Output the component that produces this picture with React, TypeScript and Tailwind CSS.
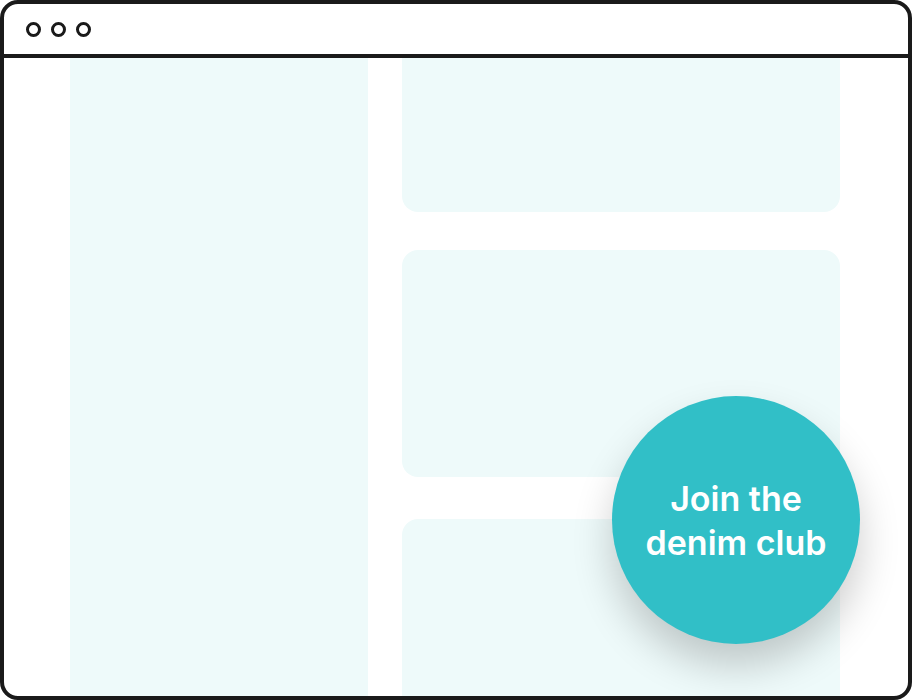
export default function App() {
  return (
    <div className="h-[700px] w-[912px] bg-white" style={{ fontFamily: 'Inter, "Noto Sans", sans-serif' }}>
      <div className="relative flex h-full w-full flex-col overflow-hidden rounded-[18px] border-4 border-[#1a1a1a] bg-white">
        {/* window bar */}
        <div className="flex h-[54px] shrink-0 items-center gap-[10px] border-b-4 border-[#1a1a1a] pl-[22px]">
          <span className="h-[15px] w-[15px] rounded-full border-[3.5px] border-[#1a1a1a]" />
          <span className="h-[15px] w-[15px] rounded-full border-[3.5px] border-[#1a1a1a]" />
          <span className="h-[15px] w-[15px] rounded-full border-[3.5px] border-[#1a1a1a]" />
        </div>

        {/* page skeleton */}
        <div className="flex min-h-0 flex-1 gap-[34px] pl-[66px]">
          <div className="w-[298px] bg-[#eefafa]" />
          <div className="flex w-[438px] flex-col">
            <div className="h-[154px] shrink-0 rounded-b-[16px] bg-[#eefafa]" />
            <div className="mt-[38px] h-[227px] shrink-0 rounded-[16px] bg-[#eefafa]" />
            <div className="mt-[42px] flex-1 rounded-t-[16px] bg-[#eefafa]" />
          </div>
        </div>

        {/* call to action bubble */}
        <div className="absolute left-[608px] top-[392px] flex h-[248px] w-[248px] items-center justify-center rounded-full bg-[#31bfc7] shadow-[0_22px_40px_rgba(0,0,0,0.2)]">
          <p className="pt-[2px] text-center text-[34px] font-semibold leading-[44px] text-white">
            Join the
            <br />
            denim club
          </p>
        </div>
      </div>
    </div>
  );
}
